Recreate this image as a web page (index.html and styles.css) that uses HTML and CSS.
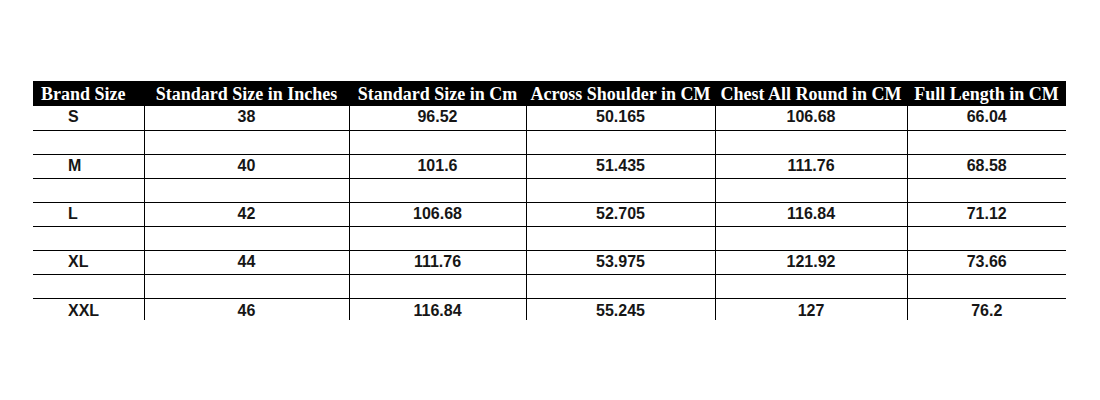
FILE: index.html
```html
<!DOCTYPE html>
<html lang="en">
<head>
<meta charset="utf-8">
<title>Size Chart</title>
<link rel="stylesheet" href="styles.css">
</head>
<body>
<div class="page">
  <table class="size-chart">
    <colgroup>
      <col class="c1"><col class="c2"><col class="c3"><col class="c4"><col class="c5"><col class="c6">
    </colgroup>
    <thead>
      <tr>
        <th class="first">Brand Size</th>
        <th>Standard Size in Inches</th>
        <th>Standard Size in Cm</th>
        <th>Across Shoulder in CM</th>
        <th>Chest All Round in CM</th>
        <th>Full Length in CM</th>
      </tr>
    </thead>
    <tbody>
      <tr><td class="first">S</td><td>38</td><td>96.52</td><td>50.165</td><td>106.68</td><td>66.04</td></tr>
      <tr class="blank"><td class="first"></td><td></td><td></td><td></td><td></td><td></td></tr>
      <tr><td class="first">M</td><td>40</td><td>101.6</td><td>51.435</td><td>111.76</td><td>68.58</td></tr>
      <tr class="blank"><td class="first"></td><td></td><td></td><td></td><td></td><td></td></tr>
      <tr><td class="first">L</td><td>42</td><td>106.68</td><td>52.705</td><td>116.84</td><td>71.12</td></tr>
      <tr class="blank"><td class="first"></td><td></td><td></td><td></td><td></td><td></td></tr>
      <tr><td class="first">XL</td><td>44</td><td>111.76</td><td>53.975</td><td>121.92</td><td>73.66</td></tr>
      <tr class="blank"><td class="first"></td><td></td><td></td><td></td><td></td><td></td></tr>
      <tr class="last"><td class="first">XXL</td><td>46</td><td>116.84</td><td>55.245</td><td>127</td><td>76.2</td></tr>
    </tbody>
  </table>
</div>
</body>
</html>
```

FILE: styles.css
```css
html, body {
  margin: 0;
  padding: 0;
  background: #ffffff;
}

.page {
  padding: 81px 0 0 33px;
}

.size-chart {
  width: 1033px;
  table-layout: fixed;
  border-collapse: collapse;
  border-spacing: 0;
}

.c1 { width: 111px; }
.c2 { width: 205px; }
.c3 { width: 177px; }
.c4 { width: 189px; }
.c5 { width: 192px; }
.c6 { width: 159px; }

.size-chart th {
  background: #000000;
  color: #ffffff;
  font-family: "Liberation Serif", "Times New Roman", serif;
  font-weight: bold;
  font-size: 18px;
  height: 25px;
  padding: 1px 0 0 0;
  text-align: center;
  white-space: nowrap;
  line-height: 24px;
  box-sizing: border-box;
}

.size-chart th.first {
  text-align: left;
  padding-left: 8px;
}

.size-chart td {
  font-family: "Liberation Sans", Arial, sans-serif;
  font-weight: bold;
  font-size: 16px;
  color: #161616;
  text-align: center;
  height: 23px;
  padding: 2px 0 0 0;
  line-height: 18px;
  border-left: 1px solid #000000;
  border-bottom: 1px solid #000000;
  box-sizing: border-box;
  vertical-align: top;
}

.size-chart tbody tr {
  height: 24px;
}

.size-chart td.first {
  border-left: none;
  text-align: left;
  padding-left: 35px;
}

.size-chart tr.last td {
  border-bottom: none;
  height: 20px;
  padding-top: 3px;
}

.size-chart tr.last {
  height: 20px;
}
```
